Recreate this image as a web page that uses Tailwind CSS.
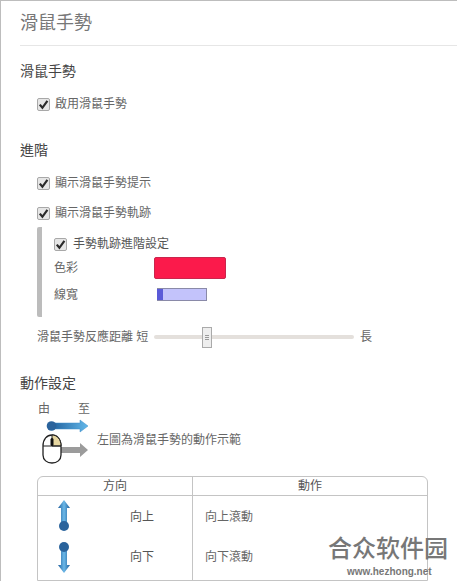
<!DOCTYPE html>
<html lang="zh-Hant">
<head>
    <meta charset="UTF-8">
    <meta name="viewport" content="width=device-width, initial-scale=1.0">
    <title>滑鼠手勢</title>
    <script src="https://cdn.jsdelivr.net/npm/@tailwindcss/browser@4"></script>
</head>
<body class="bg-white">
<div class="relative w-[457px] h-[581px] overflow-hidden border-t border-l border-[#bdbdbd] text-[#666] text-[12px] leading-[14px] font-['Liberation_Sans','Noto_Sans_CJK_TC',sans-serif]">
    <svg width="0" height="0" class="absolute">
        <defs>
            <linearGradient id="blueH" x1="0" x2="1" y1="0" y2="0"><stop offset="0" stop-color="#1f5f9c"/><stop offset="1" stop-color="#62b8ea"/></linearGradient>
            <linearGradient id="blueV" x1="0" x2="1" y1="0" y2="0"><stop offset="0" stop-color="#1f5f9c"/><stop offset=".5" stop-color="#6bb8e8"/><stop offset="1" stop-color="#1f5f9c"/></linearGradient>
            <symbol id="check" viewBox="0 0 13 13">
                <rect x=".5" y=".5" width="12" height="12" rx="1.5" fill="#e6e6e6" stroke="#a8a8a8"/>
                <path d="M2.8 6.6l2.6 3.2L10.4 2.8" fill="none" stroke="#2a2a2a" stroke-width="2.2"/>
            </symbol>
        </defs>
    </svg>

    <h1 class="h-[44px] ml-[19px] pt-[11px] text-[18px] leading-[22px] font-normal text-[#777]">滑鼠手勢</h1>
    <div class="ml-[19px] border-t border-[#e6e6e6]"></div>

    <h2 class="ml-[19px] mt-[17px] text-[14px] leading-[16px] font-normal text-[#444]">滑鼠手勢</h2>
    <label class="ml-[36px] mt-[17px] flex items-center gap-[5px] h-[16px]">
        <svg class="w-[13px] h-[13px]"><use href="#check"/></svg><span>啟用滑鼠手勢</span>
    </label>

    <h2 class="ml-[19px] mt-[30px] text-[14px] leading-[16px] font-normal text-[#444]">進階</h2>
    <label class="ml-[36px] mt-[17px] flex items-center gap-[5px] h-[16px]">
        <svg class="w-[13px] h-[13px]"><use href="#check"/></svg><span>顯示滑鼠手勢提示</span>
    </label>
    <label class="ml-[36px] mt-[14px] flex items-center gap-[5px] h-[16px]">
        <svg class="w-[13px] h-[13px]"><use href="#check"/></svg><span>顯示滑鼠手勢軌跡</span>
    </label>

    <div class="ml-[36px] mt-[6px] h-[90px] border-l-[5px] border-[#bcbcbc] rounded-[2px] pl-[12px] pt-[9px]">
        <label class="flex items-center gap-[6px] h-[16px] text-[#555]">
            <svg class="w-[13px] h-[13px]"><use href="#check"/></svg><span>手勢軌跡進階設定</span>
        </label>
        <div class="flex items-center h-[22px] mt-[5px]">
            <span class="w-[100px]">色彩</span>
            <div class="w-[72px] h-[22px] bg-[#fb1a4b] border border-[#c9264d] rounded-[2px]"></div>
        </div>
        <div class="flex items-center h-[13px] mt-[9px]">
            <span class="w-[103px]">線寬</span>
            <div class="w-[50px] h-[13px] bg-[#c3c3fb] border border-[#8a8aa8] border-l-0">
                <div class="w-[6px] h-full bg-[#5a5ad8]"></div>
            </div>
        </div>
    </div>

    <div class="ml-[36px] mt-[11px] flex items-center h-[18px]">
        <span class="w-[117px] whitespace-nowrap">滑鼠手勢反應距離 短</span>
        <div class="relative w-[200px] h-[4px] bg-[#e4e0dc] rounded-full">
            <div class="absolute left-[48px] top-[-8px] w-[10px] h-[21px] bg-[#eee] border border-[#aaa] flex flex-col items-center justify-center gap-[1px]">
                <i class="block w-[4px] h-px bg-[#999]"></i><i class="block w-[4px] h-px bg-[#999]"></i><i class="block w-[4px] h-px bg-[#999]"></i>
            </div>
        </div>
        <span class="ml-[6px]">長</span>
    </div>

    <h2 class="ml-[19px] mt-[29px] text-[14px] leading-[16px] font-normal text-[#444]">動作設定</h2>

    <div class="ml-[37px] mt-[11px] w-[52px] flex justify-between">
        <span>由</span><span>至</span>
    </div>
    <div class="ml-[45px] mt-[3px] flex">
        <svg width="44" height="14" viewBox="0 0 44 14">
            <path d="M5 4h29V1l8 6-8 6v-3H5z" fill="url(#blueH)" stroke="#3f8fc8" stroke-width=".5"/>
            <circle cx="5.500" cy="7" r="4.800" fill="#2a639c"/>
        </svg>
    </div>
    <div class="ml-[41px] mt-[1px] flex items-start">
        <svg width="47" height="30" viewBox="0 0 47 30">
            <path d="M19 13h19V9l8 7-8 7v-4H19z" fill="#9b9b9b"/>
            <path d="M1 12C1 5 5 1 10 1s9 4 9 11v9c0 5-4 8-9 8s-9-3-9-8z" fill="#fff" stroke="#222" stroke-width="1.300"/>
            <path d="M10 1c5 0 9 4 9 11H10z" fill="#e6d6a0" stroke="#222" stroke-width="1"/>
            <path d="M1 12h18" stroke="#222"/>
            <rect x="8.500" y="4" width="3" height="8" rx="1.500" fill="#111"/>
        </svg>
        <span class="ml-[8px] -mt-[1px] whitespace-nowrap">左圖為滑鼠手勢的動作示範</span>
    </div>

    <div class="ml-[36px] mt-[12px] w-[391px] h-[105px] border border-[#c4c4c4] rounded-t-[6px]">
        <div class="flex h-[19px] border-b border-[#c4c4c4] text-[#555] leading-[18px]">
            <div class="w-[155px] text-center border-r border-[#c4c4c4]">方向</div>
            <div class="flex-1 text-center">動作</div>
        </div>
        <div class="flex h-[42px]">
            <div class="w-[155px] flex items-center border-r border-[#c4c4c4]">
                <svg class="ml-[19px] -mt-[2px]" width="14" height="32" viewBox="0 0 14 32">
                    <path d="M7 0l6 8H10v18H4V8H1z" fill="url(#blueV)"/>
                    <circle cx="7" cy="26" r="5" fill="#2a639c"/>
                </svg>
                <span class="ml-[59px] text-[#555]">向上</span>
            </div>
            <div class="pl-[12px] flex items-center">向上滾動</div>
        </div>
        <div class="flex h-[42px]">
            <div class="w-[155px] flex items-center pb-[4px] border-r border-[#c4c4c4]">
                <svg class="ml-[19px]" width="14" height="32" viewBox="0 0 14 32">
                    <path d="M7 32l6-8H10V6H4v18H1z" fill="url(#blueV)"/>
                    <circle cx="7" cy="6" r="5" fill="#2a639c"/>
                </svg>
                <span class="ml-[59px] text-[#555]">向下</span>
            </div>
            <div class="pl-[12px] pb-[4px] flex items-center">向下滾動</div>
        </div>
    </div>

    <div class="absolute left-[327px] top-[533px] w-[128px] text-[#777]">
        <div class="text-[24px] leading-[29px] font-medium whitespace-nowrap">合众软件园</div>
        <div class="text-[10px] leading-[12px] font-bold ml-[19px] mt-[3px]">www.hezhong.net</div>
    </div>
</div>
</body>
</html>
